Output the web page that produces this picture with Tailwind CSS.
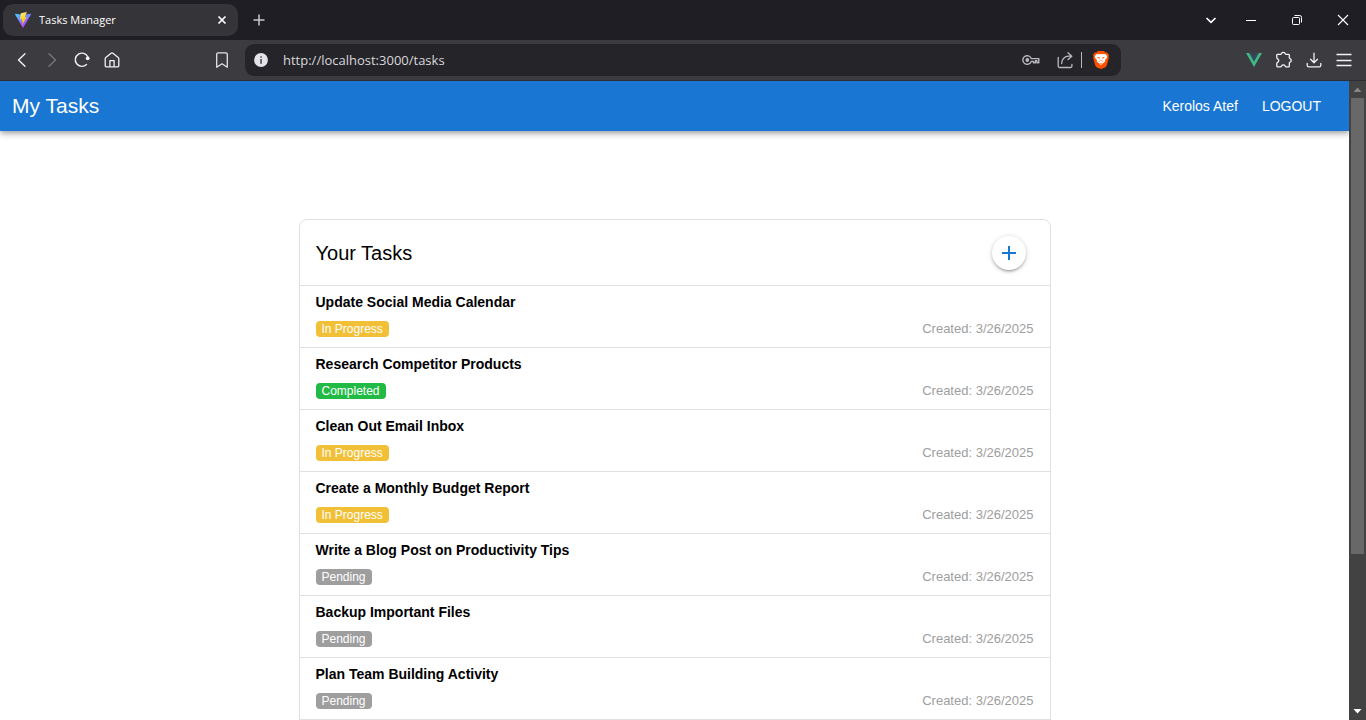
<!DOCTYPE html>
<html lang="en">
<head>
<meta charset="utf-8">
<meta name="viewport" content="width=device-width, initial-scale=1">
<title>Tasks Manager</title>
<script src="https://cdn.jsdelivr.net/npm/@tailwindcss/browser@4"></script>
</head>
<body class="flex h-screen flex-col overflow-hidden bg-white font-['Liberation_Sans',Arial,sans-serif] text-black">

<!-- Window title bar -->
<div class="flex h-10 shrink-0 items-center bg-[#1f1e24] pl-[3px] font-['Open_Sans','Noto_Sans',sans-serif] text-white">
  <div class="flex h-8 w-[235px] items-center rounded-[10px] bg-[#353439] pr-2 pl-3">
    <svg class="h-4 w-4 shrink-0" viewBox="0 0 16 16">
      <defs>
        <linearGradient id="viteBody" x1="0" y1="0" x2="0.6" y2="1"><stop offset="0" stop-color="#41d1ff"/><stop offset="1" stop-color="#bd34fe"/></linearGradient>
        <linearGradient id="viteBolt" x1="0.4" y1="0" x2="0.6" y2="1"><stop offset="0" stop-color="#ffea83"/><stop offset="0.3" stop-color="#ffdd35"/><stop offset="1" stop-color="#ffa800"/></linearGradient>
      </defs>
      <path fill="url(#viteBody)" d="M15.9 2.4 8.4 15.5a.5.5 0 0 1-.8 0L.1 2.4a.4.4 0 0 1 .4-.6L8 3.1l7.5-1.3a.4.4 0 0 1 .4.6z"/>
      <path fill="url(#viteBolt)" d="M12 0 5.800 1.200 5.200 7.500l2-.5-.6 2.800 1.300-.4-1 4.300 4.800-8.900-2.200.4z"/>
    </svg>
    <span class="ml-2 flex-1 text-[11px]">Tasks Manager</span>
    <button class="grid h-4 w-4 place-items-center" aria-label="Close tab">
      <svg class="h-4 w-4" viewBox="0 0 16 16" fill="none" stroke="#fff" stroke-width="1.700"><path d="m4.500 4.500 7 7m0-7-7 7"/></svg>
    </button>
  </div>
  <button class="ml-[13px] h-4 w-4" aria-label="New tab">
    <svg class="h-4 w-4" viewBox="0 0 16 16" fill="none" stroke="#c9c8cd" stroke-width="1.500"><path d="M8 2.500v11M2.500 8h11"/></svg>
  </button>
  <div class="ml-auto flex items-center gap-[30px] pr-[15px]">
    <button class="h-4 w-4" aria-label="Search tabs"><svg class="h-4 w-4" viewBox="0 0 16 16" fill="none" stroke="#fff" stroke-width="1.700"><path d="m3.500 6 4.500 4.300L12.500 6"/></svg></button>
    <button class="ml-[-6px] h-4 w-4" aria-label="Minimize"><svg class="h-4 w-4" viewBox="0 0 16 16" stroke="#fff"><path d="M3 8.500h10"/></svg></button>
    <button class="h-4 w-4" aria-label="Restore"><svg class="h-4 w-4" viewBox="0 0 16 16" fill="none" stroke="#fff"><rect x="3.500" y="5.500" width="7" height="7" rx="1"/><path d="M5.500 3.500h5.200a1.800 1.800 0 0 1 1.800 1.800v5.200"/></svg></button>
    <button class="h-4 w-4" aria-label="Close window"><svg class="h-4 w-4" viewBox="0 0 16 16" fill="none" stroke="#fff" stroke-width="1.100"><path d="m3 3 10 10M13 3 3 13"/></svg></button>
  </div>
</div>

<!-- Toolbar -->
<div class="flex h-[41px] shrink-0 items-center border-b border-[#2e2d32] bg-[#3c3b40] font-['Open_Sans','Noto_Sans',sans-serif]">
  <div class="flex w-[245px] shrink-0 items-center gap-3 pl-[13px]">
    <button class="h-[18px] w-[18px]" aria-label="Back"><svg class="h-[18px] w-[18px]" viewBox="0 0 18 18" fill="none" stroke="#f2f1f5" stroke-width="1.400" stroke-linecap="round" stroke-linejoin="round"><path d="M12 2.700 5.500 9l6.500 6.300"/></svg></button>
    <button class="h-[18px] w-[18px]" aria-label="Forward"><svg class="h-[18px] w-[18px]" viewBox="0 0 18 18" fill="none" stroke="#77767c" stroke-width="1.400" stroke-linecap="round" stroke-linejoin="round"><path d="M6 2.700 12.500 9 6 15.300"/></svg></button>
    <button class="h-[18px] w-[18px]" aria-label="Reload"><svg class="h-[18px] w-[18px]" viewBox="0 0 18 18" fill="none" stroke="#f2f1f5" stroke-width="1.400" stroke-linecap="round"><path d="M14.900 6A6.600 6.600 0 1 0 13.500 13.500"/><circle cx="14.700" cy="7.300" r="1.900" fill="#f2f1f5" stroke="none"/></svg></button>
    <button class="h-[18px] w-[18px]" aria-label="Home"><svg class="h-[18px] w-[18px]" viewBox="0 0 18 18" fill="none" stroke="#f2f1f5" stroke-width="1.300" stroke-linejoin="round"><path d="M2.200 7.800a1.500 1.500 0 0 1 .6-1.200L8.100 2.300a1.400 1.400 0 0 1 1.800 0l5.300 4.300a1.500 1.500 0 0 1 .6 1.200v7a1 1 0 0 1-1 1H3.200a1 1 0 0 1-1-1z"/><path d="M6.900 15.800V9.600h4.200v6.200"/></svg></button>
    <button class="mr-[14px] ml-auto h-[18px] w-[18px]" aria-label="Bookmark this page"><svg class="h-[18px] w-[18px]" viewBox="0 0 18 18" fill="none" stroke="#e4e3e8" stroke-width="1.300" stroke-linejoin="round"><path d="M3.700 3.200a1.400 1.400 0 0 1 1.400-1.400h7.800a1.400 1.400 0 0 1 1.400 1.400v13L9 12.800l-5.300 3.400z"/></svg></button>
  </div>
  <div class="flex h-8 w-[876px] items-center rounded-[9px] bg-[#252429] px-2">
    <button class="h-4 w-4 shrink-0" aria-label="Site information"><svg class="h-4 w-4" viewBox="0 0 16 16"><circle cx="8" cy="8" r="6.900" fill="#e4e3ea"/><path d="M7.200 4.200h1.700v1.600H7.200zM7.200 7h1.700v4.800H7.200z" fill="#56555b"/></svg></button>
    <input type="text" aria-label="Address" value="http://localhost:3000/tasks" class="ml-[14px] h-8 min-w-0 flex-1 bg-transparent text-[13px] text-[#d8d7dc] outline-none">
    <button class="h-[18px] w-[18px] shrink-0" aria-label="Passwords"><svg class="h-[18px] w-[18px]" viewBox="0 0 18 18" fill="none" stroke="#b9b8be" stroke-width="1.400" stroke-linejoin="round"><path d="M9.200 7.600h7.600v4.100h-1.900v-1.900h-1.500v1.900h-2V10.400H9.200a4.300 4.300 0 1 1 0-2.800z"/><circle cx="5.300" cy="9" r="1.200" fill="#b9b8be"/></svg></button>
    <button class="ml-4 h-[18px] w-[18px] shrink-0" aria-label="Share"><svg class="h-[18px] w-[18px]" viewBox="0 0 18 18" fill="none" stroke="#b9b8be" stroke-width="1.300" stroke-linecap="round" stroke-linejoin="round"><path d="M2.200 6.500v8.600a1.400 1.400 0 0 0 1.400 1.400h10.900a1.400 1.400 0 0 0 1.400-1.400v-1.600M12 1.800l3.800 3.400L12 8.600M15.600 5.200h-3.100a6.800 6.800 0 0 0-6.800 6.800v.6"/></svg></button>
    <span class="ml-[7px] h-4 w-px bg-[#b9b8be]"></span>
    <button class="ml-[11px] h-[18px] w-4 shrink-0" aria-label="Brave Shields"><svg class="h-[18px] w-4" viewBox="0 0 16 18"><path fill="#ff5000" d="M5 0h6l1.400 1.500 1.700-.1L16 4l-.5 1.500.4 1.300-2.100 7.400c-.3 1-1 1.700-1.800 2.200L8 18l-4-1.600c-.8-.5-1.500-1.200-1.800-2.200L.1 6.800l.4-1.300L0 4l1.900-2.600 1.700.1z"/><path fill="#fff" d="m5 2.900 1.600.4L8 3l1.400.3 1.600-.4 1.700.3 1.500 2.100-.4 1.700-1.900 2.300.4 1.300-2.100 1.500L8 14l-2.200-1.900-2.100-1.500.4-1.300-1.900-2.300-.4-1.700 1.500-2.100z"/><path fill="#ff5000" d="m3.900 6 2.600.3.3.9-.6.500zM12.100 6l-2.600.3-.3.900.6.500zM7.300 8.800h1.400L8 10.200zM5.500 9.300l1.500 1.300-.6.500zM10.500 9.300 9 10.600l.6.500zM7 12.300l1-.6 1 .6-1 .7z"/></svg></button>
    <span class="w-1 shrink-0"></span>
  </div>
  <div class="ml-auto flex items-center gap-3 pr-[13px]">
    <button class="h-[18px] w-[18px]" aria-label="Vue Devtools"><svg class="h-[18px] w-[18px]" viewBox="0 0 18 18"><path fill="#41b883" d="M1 2h3.300L9 10.200 13.700 2H17L9 16z"/><path fill="#35495e" d="M4.300 2h2.900L9 5.100 10.800 2h2.900L9 10.200z"/></svg></button>
    <button class="h-[18px] w-[18px]" aria-label="Extensions"><svg class="h-[18px] w-[18px]" viewBox="0 0 18 18" fill="none" stroke="#f2f1f5" stroke-width="1.300" stroke-linejoin="round"><path d="M3.300 3.300h2.200c.5 0 .8-.3 1-.8a2 2 0 0 1 3.600 0c.2.500.5.800 1 .8h2.300a.9.900 0 0 1 .9.900v2.400c0 .5.300.8.800 1a2 2 0 0 1 0 3.600c-.5.200-.8.500-.8 1v2.700a.9.900 0 0 1-.9.900h-2.300c-.5 0-.8-.3-1-.8a2 2 0 0 0-3.600 0c-.2.500-.5.800-1 .8H2.700a.9.900 0 0 1-.9-.9v-2.500c0-.5.300-.8.800-1a2 2 0 0 0 0-3.600c-.5-.2-.8-.5-.8-1V4.200a.9.900 0 0 1 .9-.9z"/></svg></button>
    <button class="h-[18px] w-[18px]" aria-label="Downloads"><svg class="h-[18px] w-[18px]" viewBox="0 0 18 18" fill="none" stroke="#f2f1f5" stroke-width="1.300" stroke-linecap="round" stroke-linejoin="round"><path d="M9 2.200v9.300M5.500 8.300 9 11.700l3.500-3.400M2.200 12.500v1.700a1.600 1.600 0 0 0 1.600 1.600h10.400a1.600 1.600 0 0 0 1.600-1.600v-1.700"/></svg></button>
    <button class="h-[18px] w-[18px]" aria-label="Menu"><svg class="h-[18px] w-[18px]" viewBox="0 0 18 18" stroke="#f2f1f5" stroke-width="1.300"><path d="M1.500 3.500h15M1.500 9.500h15M1.500 14.500h15"/></svg></button>
  </div>
</div>

<!-- Page viewport -->
<div class="flex min-h-0 flex-1">
  <div class="min-w-0 flex-1 overflow-hidden">
    <header class="flex h-[50px] items-center bg-[#1976d2] pr-7 pl-3 text-white shadow-[0_2px_4px_-1px_rgba(0,0,0,0.2),0_4px_5px_rgba(0,0,0,0.14),0_1px_10px_rgba(0,0,0,0.12)]">
      <h1 class="flex-1 text-[21px]">My Tasks</h1>
      <a href="#profile" class="text-sm">Kerolos Atef</a>
      <button class="ml-6 text-sm">LOGOUT</button>
    </header>
    <main class="px-4 pt-[88px]">
      <section class="mx-auto max-w-[752px] rounded-lg border border-[#e0e0e0] pb-4">
        <div class="flex h-[65px] items-center justify-between pr-6 pl-4">
          <h2 class="text-xl">Your Tasks</h2>
          <button class="grid h-[34px] w-[34px] place-items-center rounded-full bg-white shadow-[0_1px_5px_rgba(0,0,0,0.2),0_2px_2px_rgba(0,0,0,0.14),0_3px_1px_-2px_rgba(0,0,0,0.12)]" aria-label="Add task">
            <svg class="h-6 w-6" viewBox="0 0 24 24" fill="#1976d2"><path d="M19 13h-6v6h-2v-6H5v-2h6V5h2v6h6z"/></svg>
          </button>
        </div>
        <ul>
          <li class="border-t border-[#e0e0e0] px-4 pt-[6px] pb-[10px]">
            <h3 class="text-sm leading-5 font-bold">Update Social Media Calendar</h3>
            <div class="mt-[9px] flex h-4 items-center justify-between"><span class="rounded bg-[#f2c037] px-[6px] text-xs leading-4 text-white">In Progress</span><span class="text-[13px] text-[#9e9e9e]">Created: 3/26/2025</span></div>
          </li>
          <li class="border-t border-[#e0e0e0] px-4 pt-[6px] pb-[10px]">
            <h3 class="text-sm leading-5 font-bold">Research Competitor Products</h3>
            <div class="mt-[9px] flex h-4 items-center justify-between"><span class="rounded bg-[#21ba45] px-[6px] text-xs leading-4 text-white">Completed</span><span class="text-[13px] text-[#9e9e9e]">Created: 3/26/2025</span></div>
          </li>
          <li class="border-t border-[#e0e0e0] px-4 pt-[6px] pb-[10px]">
            <h3 class="text-sm leading-5 font-bold">Clean Out Email Inbox</h3>
            <div class="mt-[9px] flex h-4 items-center justify-between"><span class="rounded bg-[#f2c037] px-[6px] text-xs leading-4 text-white">In Progress</span><span class="text-[13px] text-[#9e9e9e]">Created: 3/26/2025</span></div>
          </li>
          <li class="border-t border-[#e0e0e0] px-4 pt-[6px] pb-[10px]">
            <h3 class="text-sm leading-5 font-bold">Create a Monthly Budget Report</h3>
            <div class="mt-[9px] flex h-4 items-center justify-between"><span class="rounded bg-[#f2c037] px-[6px] text-xs leading-4 text-white">In Progress</span><span class="text-[13px] text-[#9e9e9e]">Created: 3/26/2025</span></div>
          </li>
          <li class="border-t border-[#e0e0e0] px-4 pt-[6px] pb-[10px]">
            <h3 class="text-sm leading-5 font-bold">Write a Blog Post on Productivity Tips</h3>
            <div class="mt-[9px] flex h-4 items-center justify-between"><span class="rounded bg-[#9e9e9e] px-[6px] text-xs leading-4 text-white">Pending</span><span class="text-[13px] text-[#9e9e9e]">Created: 3/26/2025</span></div>
          </li>
          <li class="border-t border-[#e0e0e0] px-4 pt-[6px] pb-[10px]">
            <h3 class="text-sm leading-5 font-bold">Backup Important Files</h3>
            <div class="mt-[9px] flex h-4 items-center justify-between"><span class="rounded bg-[#9e9e9e] px-[6px] text-xs leading-4 text-white">Pending</span><span class="text-[13px] text-[#9e9e9e]">Created: 3/26/2025</span></div>
          </li>
          <li class="border-y border-[#e0e0e0] px-4 pt-[6px] pb-[10px]">
            <h3 class="text-sm leading-5 font-bold">Plan Team Building Activity</h3>
            <div class="mt-[9px] flex h-4 items-center justify-between"><span class="rounded bg-[#9e9e9e] px-[6px] text-xs leading-4 text-white">Pending</span><span class="text-[13px] text-[#9e9e9e]">Created: 3/26/2025</span></div>
          </li>
        </ul>
      </section>
    </main>
  </div>

  <!-- Scrollbar -->
  <div class="flex w-[17px] shrink-0 flex-col items-center bg-[#424242]">
    <svg class="h-[17px] w-[17px] shrink-0" viewBox="0 0 17 17" fill="#868686"><path d="m8.500 6.500 4 4.500h-8z"/></svg>
    <div class="h-[456px] w-[13px] bg-[#686868]"></div>
    <svg class="mt-auto h-[17px] w-[17px] shrink-0" viewBox="0 0 17 17" fill="#fff"><path d="m8.500 10.500 4-4.500h-8z"/></svg>
  </div>
</div>
</body>
</html>
